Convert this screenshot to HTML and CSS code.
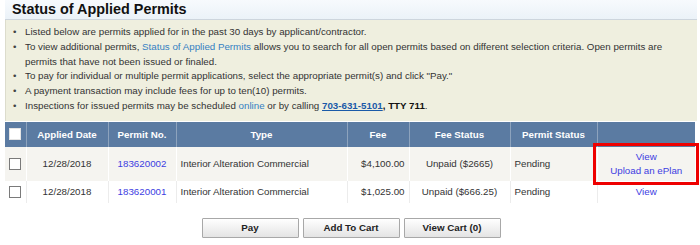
FILE: index.html
```html
<!DOCTYPE html>
<html>
<head>
  <meta charset="UTF-8">
  <title>Status of Applied Permits</title>
  <link rel="stylesheet" href="styles.css">
</head>
<body>
<div class="page">
  <h2 class="section-title">Status of Applied Permits</h2>
  <div class="notes">
    <ul>
      <li>Listed below are permits applied for in the past 30 days by applicant/contractor.</li>
      <li>To view additional permits, <a href="#" class="soft">Status of Applied Permits</a> allows you to search for all open permits based on different selection criteria. Open permits are permits that have not been issued or finaled.</li>
      <li>To pay for individual or multiple permit applications, select the appropriate permit(s) and click "Pay."</li>
      <li>A payment transaction may include fees for up to ten(10) permits.</li>
      <li>Inspections for issued permits may be scheduled <a href="#" class="soft">online</a> or by calling <a href="#" class="phone">703-631-5101</a><b>, TTY 711</b>.</li>
    </ul>
  </div>
  <table class="permits">
    <colgroup>
      <col class="w-check"><col class="w-date"><col class="w-no"><col class="w-type">
      <col class="w-fee"><col class="w-fstatus"><col class="w-pstatus"><col class="w-actions">
    </colgroup>
    <thead>
      <tr>
        <th><span class="box box-head"></span></th>
        <th>Applied Date</th>
        <th>Permit No.</th>
        <th>Type</th>
        <th>Fee</th>
        <th>Fee Status</th>
        <th>Permit Status</th>
        <th></th>
      </tr>
    </thead>
    <tbody>
      <tr class="odd">
        <td class="c"><span class="box"></span></td>
        <td class="c">12/28/2018</td>
        <td class="c"><a href="#">183620002</a></td>
        <td>Interior Alteration Commercial</td>
        <td class="r">$4,100.00</td>
        <td class="c">Unpaid ($2665)</td>
        <td>Pending</td>
        <td class="c marked"><a href="#">View</a><br><a href="#">Upload an ePlan</a></td>
      </tr>
      <tr>
        <td class="c"><span class="box"></span></td>
        <td class="c">12/28/2018</td>
        <td class="c"><a href="#">183620001</a></td>
        <td>Interior Alteration Commercial</td>
        <td class="r">$1,025.00</td>
        <td class="c">Unpaid ($666.25)</td>
        <td>Pending</td>
        <td class="c"><a href="#">View</a></td>
      </tr>
    </tbody>
  </table>
  <div class="buttons">
    <button>Pay</button>
    <button>Add To Cart</button>
    <button>View Cart (0)</button>
  </div>
</div>
</body>
</html>
```

FILE: styles.css
```css
body {
  margin: 0;
  padding: 0;
  font-family: 'Liberation Sans', Arial, sans-serif;
  font-size: 9.75px;
  color: #333;
  background: #fff;
}
.page {
  padding: 0 3px 0 5px;
}
.section-title {
  margin: 0;
  height: 19px;
  line-height: 19px;
  padding: 0 7px;
  font-size: 14.4px;
  font-weight: bold;
  color: #111;
  background: linear-gradient(#f7fafd, #ebf2f8);
  border-bottom: 1px solid #cdd5dd;
}
.notes {
  background: #efefdf;
  border-left: 1px solid #dcdccc;
  padding: 5px 8px 7px 6px;
}
.notes ul {
  margin: 0;
  padding: 0;
  list-style: none;
}
.notes li {
  position: relative;
  padding-left: 13px;
  line-height: 14.8px;
}
.notes li:before {
  content: "\2022";
  position: absolute;
  left: 1px;
  color: #444;
}
.notes a.soft {
  color: #3580c2;
  text-decoration: none;
}
.notes a.phone {
  color: #1a5aa8;
  font-weight: bold;
}
.notes b {
  color: #111;
}
.permits {
  margin-top: 1px;
  width: 690px;
  border-collapse: collapse;
  table-layout: fixed;
}
.w-check { width: 21px; }
.w-date { width: 82px; }
.w-no { width: 68px; }
.w-type { width: 171px; }
.w-fee { width: 62px; }
.w-fstatus { width: 101px; }
.w-pstatus { width: 87px; }
.w-actions { width: 98px; }
.permits thead tr {
  height: 25px;
}
.permits th {
  background: #5b7ba2;
  color: #fff;
  font-weight: bold;
  padding: 0 4px;
  border-left: 1px solid #8da3bd;
  text-align: center;
}
.permits th:first-child {
  border-left: none;
}
.permits tbody tr {
  height: 22px;
}
.permits tbody tr.odd {
  height: 34px;
}
.permits td {
  padding: 0 4px;
  line-height: 14px;
  border-left: 1px solid #ececec;
  vertical-align: middle;
  white-space: nowrap;
}
.permits td:first-child {
  border-left: none;
}
.permits tr.odd td {
  background: #f5f4f0;
  border-left-color: #ffffff;
}
.permits td.c { text-align: center; }
.permits td.r { text-align: right; }
.permits a {
  color: #3d3de2;
  text-decoration: none;
}
.box {
  display: inline-block;
  width: 10px;
  height: 10px;
  border: 1px solid #7a7a7a;
  background: #fff;
  vertical-align: middle;
}
.box-head {
  border-color: #e4e4e4;
}
.marked {
  outline: 3px solid #ee0000;
  outline-offset: 1px;
}
.buttons {
  display: flex;
  justify-content: center;
  gap: 4px;
  margin-top: 15px;
}
.buttons button {
  width: 97px;
  height: 20px;
  font-family: 'Liberation Sans', Arial, sans-serif;
  font-size: 9.75px;
  font-weight: bold;
  color: #222;
  border: 1px solid #a8a8a8;
  border-radius: 1px;
  background: linear-gradient(#ffffff, #e4e4e4);
  box-shadow: 0 1px 0 #d0d0d0;
  padding: 0;
}
```
